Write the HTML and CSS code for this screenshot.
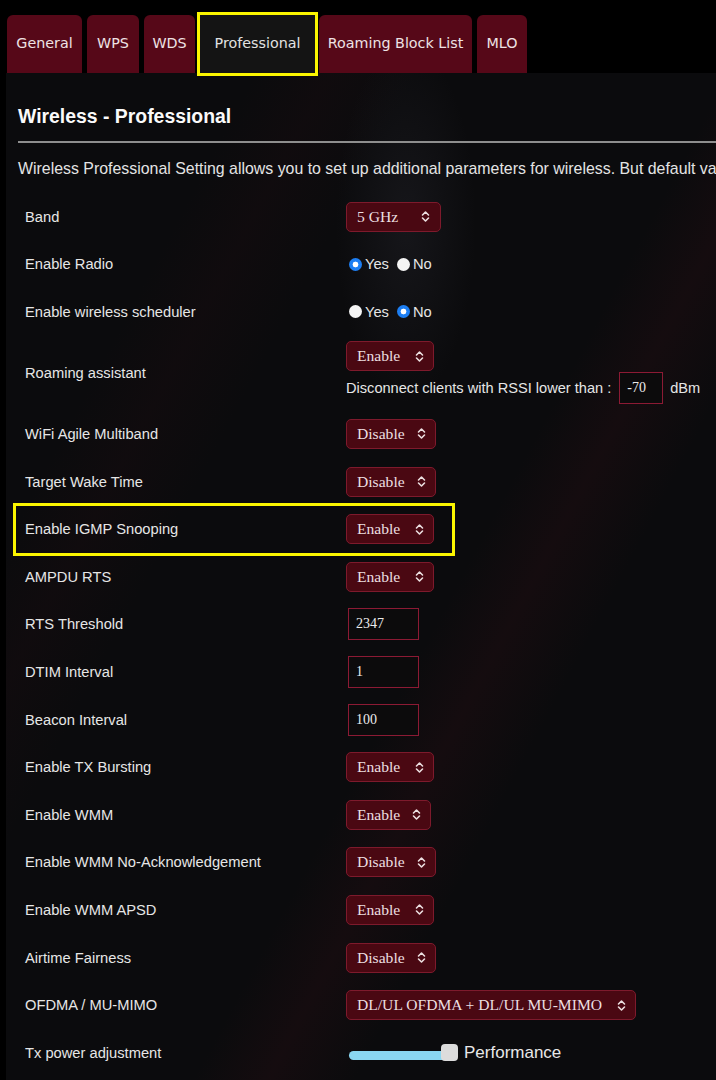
FILE: index.html
```html
<!DOCTYPE html>
<html>
<head>
<meta charset="utf-8">
<title>Wireless - Professional</title>
<link rel="stylesheet" href="styles.css">
</head>
<body>
<div class="page">
  <nav class="tabs">
    <div class="tab t-general">General</div>
    <div class="tab t-wps">WPS</div>
    <div class="tab t-wds">WDS</div>
    <div class="tab t-pro active">Professional</div>
    <div class="tab t-roam">Roaming Block List</div>
    <div class="tab t-mlo">MLO</div>
  </nav>
  <main class="panel">
    <h1 class="title">Wireless - Professional</h1>
    <div class="rule"></div>
    <p class="desc">Wireless Professional Setting allows you to set up additional parameters for wireless. But default values are recommended.</p>
    <div class="form">
      <div class="row"><div class="label">Band</div><div class="ctrl"><span class="select sel-band"><span>5 GHz</span><svg class="chev" viewBox="0 0 9 13"><path d="M1.5 5 L4.5 2 L7.5 5 M1.5 8 L4.5 11 L7.5 8"/></svg></span></div></div>
      <div class="row"><div class="label">Enable Radio</div><div class="ctrl radios"><span class="radio on"></span><span class="rtext">Yes</span><span class="radio"></span><span class="rtext">No</span></div></div>
      <div class="row"><div class="label">Enable wireless scheduler</div><div class="ctrl radios"><span class="radio"></span><span class="rtext">Yes</span><span class="radio on"></span><span class="rtext">No</span></div></div>
      <div class="row row-tall"><div class="label">Roaming assistant</div><div class="ctrl stack"><span class="select"><span>Enable</span><svg class="chev" viewBox="0 0 9 13"><path d="M1.5 5 L4.5 2 L7.5 5 M1.5 8 L4.5 11 L7.5 8"/></svg></span><div class="rssi"><span>Disconnect clients with RSSI lower than :</span><span class="field field-sm">-70</span><span class="unit">dBm</span></div></div></div>
      <div class="row"><div class="label">WiFi Agile Multiband</div><div class="ctrl"><span class="select"><span>Disable</span><svg class="chev" viewBox="0 0 9 13"><path d="M1.5 5 L4.5 2 L7.5 5 M1.5 8 L4.5 11 L7.5 8"/></svg></span></div></div>
      <div class="row"><div class="label">Target Wake Time</div><div class="ctrl"><span class="select"><span>Disable</span><svg class="chev" viewBox="0 0 9 13"><path d="M1.5 5 L4.5 2 L7.5 5 M1.5 8 L4.5 11 L7.5 8"/></svg></span></div></div>
      <div class="row hl"><div class="label">Enable IGMP Snooping</div><div class="ctrl"><span class="select"><span>Enable</span><svg class="chev" viewBox="0 0 9 13"><path d="M1.5 5 L4.5 2 L7.5 5 M1.5 8 L4.5 11 L7.5 8"/></svg></span></div></div>
      <div class="row"><div class="label">AMPDU RTS</div><div class="ctrl"><span class="select"><span>Enable</span><svg class="chev" viewBox="0 0 9 13"><path d="M1.5 5 L4.5 2 L7.5 5 M1.5 8 L4.5 11 L7.5 8"/></svg></span></div></div>
      <div class="row"><div class="label">RTS Threshold</div><div class="ctrl"><span class="field">2347</span></div></div>
      <div class="row"><div class="label">DTIM Interval</div><div class="ctrl"><span class="field">1</span></div></div>
      <div class="row"><div class="label">Beacon Interval</div><div class="ctrl"><span class="field">100</span></div></div>
      <div class="row"><div class="label">Enable TX Bursting</div><div class="ctrl"><span class="select"><span>Enable</span><svg class="chev" viewBox="0 0 9 13"><path d="M1.5 5 L4.5 2 L7.5 5 M1.5 8 L4.5 11 L7.5 8"/></svg></span></div></div>
      <div class="row"><div class="label">Enable WMM</div><div class="ctrl"><span class="select sel-narrow"><span>Enable</span><svg class="chev" viewBox="0 0 9 13"><path d="M1.5 5 L4.5 2 L7.5 5 M1.5 8 L4.5 11 L7.5 8"/></svg></span></div></div>
      <div class="row"><div class="label">Enable WMM No-Acknowledgement</div><div class="ctrl"><span class="select"><span>Disable</span><svg class="chev" viewBox="0 0 9 13"><path d="M1.5 5 L4.5 2 L7.5 5 M1.5 8 L4.5 11 L7.5 8"/></svg></span></div></div>
      <div class="row"><div class="label">Enable WMM APSD</div><div class="ctrl"><span class="select"><span>Enable</span><svg class="chev" viewBox="0 0 9 13"><path d="M1.5 5 L4.5 2 L7.5 5 M1.5 8 L4.5 11 L7.5 8"/></svg></span></div></div>
      <div class="row"><div class="label">Airtime Fairness</div><div class="ctrl"><span class="select"><span>Disable</span><svg class="chev" viewBox="0 0 9 13"><path d="M1.5 5 L4.5 2 L7.5 5 M1.5 8 L4.5 11 L7.5 8"/></svg></span></div></div>
      <div class="row"><div class="label">OFDMA / MU-MIMO</div><div class="ctrl"><span class="select sel-wide"><span>DL/UL OFDMA + DL/UL MU-MIMO</span><svg class="chev" viewBox="0 0 9 13"><path d="M1.5 5 L4.5 2 L7.5 5 M1.5 8 L4.5 11 L7.5 8"/></svg></span></div></div>
      <div class="row"><div class="label">Tx power adjustment</div><div class="ctrl slider"><span class="track"><span class="thumb"></span></span><span class="perf">Performance</span></div></div>
    </div>
  </main>
</div>
</body>
</html>
```
FILE: styles.css
```css
html, body {
  margin: 0;
  padding: 0;
  background: #000;
}
body {
  font-family: "Liberation Sans", Arial, sans-serif;
  color: #e6e6e6;
  width: 716px;
  height: 1080px;
  overflow: hidden;
}
.page {
  width: 716px;
}
.tabs {
  display: flex;
  gap: 5px;
  padding: 15px 0 0 7px;
  height: 58px;
}
.tab {
  height: 58px;
  display: flex;
  align-items: center;
  justify-content: center;
  padding-bottom: 3px;
  background: #560818;
  color: #eee2e4;
  font-family: "DejaVu Sans", Verdana, sans-serif;
  font-size: 14.3px;
  border-radius: 6px 6px 0 0;
  box-sizing: border-box;
}
.t-general { width: 75px; }
.t-wps { width: 52px; }
.t-wds { width: 51px; }
.t-pro { width: 115px; }
.t-roam { width: 153px; margin-left: -1px; }
.t-mlo { width: 50px; }
.tab.active {
  background: #141414;
  color: #e2e2e2;
  border-radius: 0;
  outline: 3px solid #fbf500;
  position: relative;
  z-index: 2;
}
.panel {
  margin-left: 6px;
  padding: 32px 0 0 12px;
  height: 1007px;
  box-sizing: border-box;
  overflow: hidden;
  background:
    radial-gradient(ellipse 70px 180px at 400px 150px, rgba(80, 80, 95, 0.16), transparent 100%),
    linear-gradient(118deg, transparent 58%, rgba(80, 18, 28, 0.14) 64%, transparent 71%),
    linear-gradient(118deg, transparent 20%, rgba(60, 14, 22, 0.10) 26%, transparent 33%),
    #0b0b0d;
}
.title {
  margin: 0;
  font-size: 19.4px;
  line-height: 22px;
  font-weight: bold;
  color: #fafafa;
}
.rule {
  margin-top: 14px;
  height: 2px;
  background: #8e8e8e;
}
.desc {
  margin: 17px 0 0 0;
  font-size: 15.9px;
  line-height: 18px;
  white-space: nowrap;
  color: #e4e4e4;
}
.form {
  margin-top: 15px;
  padding-left: 7px;
}
.row {
  display: grid;
  grid-template-columns: 321px auto;
  align-items: center;
  height: 47.6px;
}
.row-tall {
  height: 74.4px;
}
.label {
  font-size: 14.7px;
  color: #e6e6e6;
}
.ctrl {
  display: flex;
  align-items: center;
}
.stack {
  flex-direction: column;
  align-items: flex-start;
  gap: 1px;
}
.select {
  display: inline-flex;
  align-items: center;
  justify-content: space-between;
  box-sizing: border-box;
  min-width: 88px;
  height: 30px;
  padding: 0 9px 0 10px;
  background: #4a0812;
  border: 1px solid #7e1a2c;
  border-radius: 5px;
  font-family: "Liberation Serif", "Times New Roman", serif;
  font-size: 15.6px;
  color: #ecdfe0;
}
.sel-band { min-width: 95px; padding-right: 10px; }
.sel-narrow { min-width: 85px; }
.sel-wide { min-width: 290px; }
.chev {
  width: 9px;
  height: 13px;
  margin-left: 12px;
  flex: none;
}
.chev path {
  fill: none;
  stroke: #ecdfe0;
  stroke-width: 1.6;
  stroke-linecap: round;
  stroke-linejoin: round;
}
.radios {
  font-size: 14.7px;
  padding-left: 3px;
}
.radio {
  width: 13px;
  height: 13px;
  border-radius: 50%;
  background: #f4f4f4;
  flex: none;
}
.radio.on {
  background: radial-gradient(circle, #ffffff 0 2.6px, #1c7ef3 3.2px);
}
.rtext {
  margin: 0 8px 0 3px;
  color: #e6e6e6;
}
.field {
  display: flex;
  align-items: center;
  box-sizing: border-box;
  width: 71px;
  height: 32px;
  margin-left: 2px;
  padding-left: 7px;
  border: 1px solid #8c1a34;
  background: #0c0b0c;
  font-family: "Liberation Serif", "Times New Roman", serif;
  font-size: 14px;
  color: #ececec;
}
.rssi {
  display: flex;
  align-items: center;
  font-size: 14.6px;
  color: #e6e6e6;
}
.field-sm {
  width: 44px;
  margin-left: 8px;
}
.unit {
  margin-left: 7px;
}
.hl {
  position: relative;
}
.hl::before {
  content: "";
  position: absolute;
  left: -12px;
  top: -2px;
  width: 442px;
  height: 53px;
  border: 3px solid #fbf500;
  box-sizing: border-box;
  pointer-events: none;
}
.slider {
  padding-left: 3px;
}
.track {
  position: relative;
  width: 106px;
  height: 9px;
  border-radius: 5px;
  background: #8ad7f2;
  margin-top: 6px;
}
.thumb {
  position: absolute;
  right: -3px;
  top: -7px;
  width: 17px;
  height: 17px;
  border-radius: 4px;
  background: #dcdcdc;
}
.perf {
  margin-left: 9px;
  font-size: 17px;
  color: #e8e8e8;
}
```
